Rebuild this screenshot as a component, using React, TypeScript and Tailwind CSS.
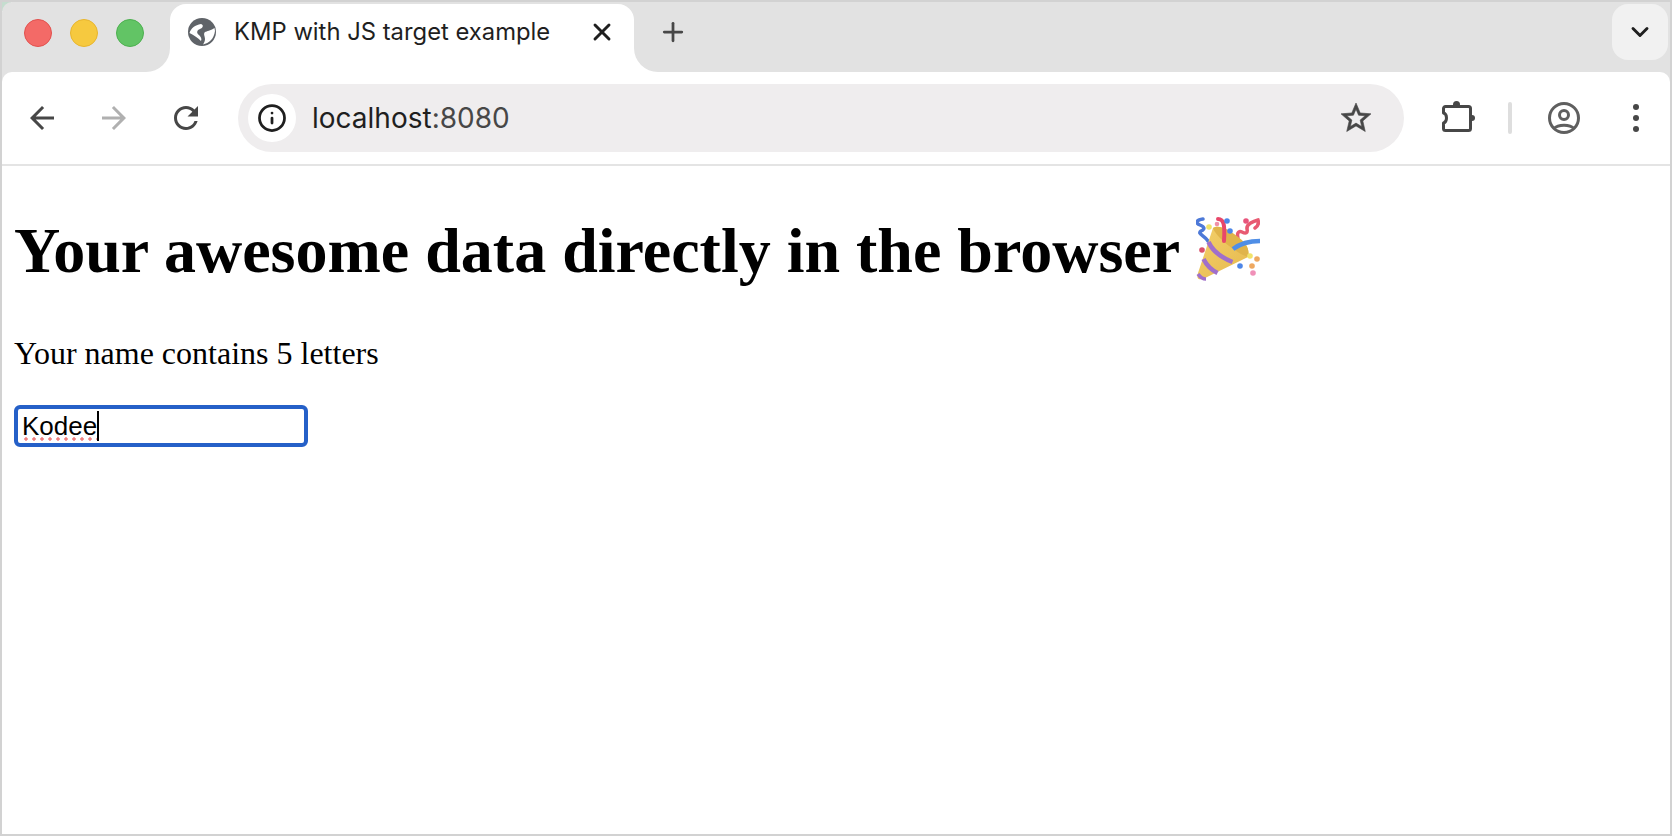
import { Info, X, Plus, ChevronDown } from 'lucide-react'

const SERIF = 'font-["Liberation_Serif","Times_New_Roman",serif]'

function MaterialIcon({ d, color, bold }: { d: string; color: string; bold?: boolean }) {
  return (
    <svg width="36" height="36" viewBox="0 0 24 24" fill={color} stroke={bold ? color : 'none'} strokeWidth={bold ? 0.4 : 0} className="shrink-0">
      <path d={d} />
    </svg>
  )
}

const BACK = 'M20 11H7.830l5.590-5.590L12 4l-8 8 8 8 1.410-1.410L7.830 13H20v-2z'
const FORWARD = 'M4 11h12.170l-5.590-5.590L12 4l8 8-8 8-1.410-1.410L16.170 13H4v-2z'
const RELOAD =
  'M17.650 6.350C16.200 4.900 14.210 4 12 4c-4.420 0-7.990 3.580-7.990 8s3.570 8 7.990 8c3.730 0 6.840-2.550 7.730-6h-2.080c-.82 2.330-3.040 4-5.650 4-3.310 0-6-2.690-6-6s2.690-6 6-6c1.660 0 3.140.69 4.220 1.780L13 11h7V4l-2.350 2.350z'
const STAR =
  'M22 9.240l-7.190-.62L12 2 9.190 8.630 2 9.240l5.460 4.730L5.820 21 12 17.270 18.180 21l-1.630-7.030L22 9.240zM12 15.400l-3.760 2.270 1-4.280-3.320-2.880 4.380-.38L12 6.100l1.710 4.040 4.380.38-3.320 2.880 1 4.280L12 15.400z'

function GlobeIcon() {
  return (
    <svg width="28" height="28" viewBox="0 0 28 28" className="shrink-0">
      <circle cx="14" cy="14" r="14" fill="#5f6368" />
      <path d="M1.500 15C3 10 7 7 13 6c3 1 2 4-1 5-3 1-4 4-1 6 2 2 3 4 2 6-3-3-7-6-11.500-8Z" fill="#fff" />
      <path d="M26.500 10c-4.500 3-7.500 3-9.500 4-2 2 0 4 0 7 0 2-1 4-2 5.500 6-1.500 11-5.500 12-13.500Z" fill="#fff" />
    </svg>
  )
}

function PuzzleIcon() {
  return (
    <svg width="36" height="36" viewBox="0 0 36 36" fill="none" className="shrink-0">
      <path
        d="M5.500 6.500h23a2 2 0 0 1 2 2v20a2 2 0 0 1-2 2h-23a2 2 0 0 1-2-2V23c4-1 4-9 0-10V8.500a2 2 0 0 1 2-2Z"
        stroke="#474747"
        strokeWidth="3"
        strokeLinejoin="round"
      />
      <circle cx="16.500" cy="4.500" r="3.500" fill="#474747" />
      <circle cx="32" cy="18" r="3" fill="#474747" />
    </svg>
  )
}

function ProfileIcon() {
  return (
    <svg width="32" height="32" viewBox="0 0 32 32" fill="none" stroke="#5f5f5f" strokeWidth="3" className="shrink-0">
      <circle cx="16" cy="16" r="14.500" />
      <circle cx="16" cy="13" r="4.500" />
      <path d="M6 26.500c4-4.500 16-4.500 20 0" />
    </svg>
  )
}

function MenuDots() {
  return (
    <svg width="6" height="28" viewBox="0 0 6 28" fill="#474747" className="shrink-0">
      <circle cx="3" cy="3" r="3" />
      <circle cx="3" cy="14" r="3" />
      <circle cx="3" cy="25" r="3" />
    </svg>
  )
}

function PartyPopper() {
  return (
    <svg width="64" height="64" viewBox="0 0 64 64" fill="none" className="shrink-0">
      <defs>
        <linearGradient id="gold" x1="0" y1="0" x2="1" y2="1">
          <stop offset="0" stopColor="#f3d06a" />
          <stop offset="1" stopColor="#e6b94e" />
        </linearGradient>
      </defs>
      <path d="M7 2C0 3-1 6 4 8c5 2 5 4 1 6-4 3 3 4 7 10" stroke="#4d79d8" strokeWidth="3.500" strokeLinecap="round" />
      <path d="M43 24c-3-7-1-11 3-9 4 2 6 1 5-3-1-5 7-8 11-9 1 3 0 6-3 8" stroke="#e85a72" strokeWidth="3.500" strokeLinecap="round" />
      <path d="M17 11 2 56c-2 6 1 7 5 6l45-22c2-8-2-14-9-19-9-8-20-14-26-10Z" fill="url(#gold)" />
      <path d="M17 11c3 9 23 25 35 29 2-8-2-14-9-19-9-8-20-14-26-10Z" fill="#e0b44a" />
      <path d="M12.500 25c4 9 14 16 24 20" stroke="#a06fcb" strokeWidth="4.500" />
      <path d="M7.500 42c3 6 8 11 14 14" stroke="#a06fcb" strokeWidth="4.500" />
      <path d="M2 57c2 3 5 5 8 5" stroke="#a06fcb" strokeWidth="3.500" />
      <path d="M22 2c6 0 7 6 6 22" stroke="#e8476a" strokeWidth="4" strokeLinecap="round" />
      <path d="M37 32c8-6 16-8 27-8" stroke="#4f8ee6" strokeWidth="4.500" />
      <circle cx="13" cy="10" r="2.800" fill="#f1e36a" />
      <circle cx="21" cy="7" r="2.300" fill="#f090a8" />
      <circle cx="31" cy="4" r="2.800" fill="#4d86e8" />
      <circle cx="34" cy="14" r="2.800" fill="#4d86e8" />
      <circle cx="50" cy="4" r="2.800" fill="#e8557c" />
      <circle cx="6" cy="33" r="2.800" fill="#d9506a" />
      <circle cx="54" cy="39" r="2.800" fill="#f1e36a" />
      <circle cx="61" cy="42" r="2.800" fill="#eea860" />
      <circle cx="56" cy="49" r="2.800" fill="#eea860" />
      <circle cx="44" cy="49" r="2.800" fill="#4d86e8" />
      <circle cx="57" cy="56" r="2.800" fill="#f090b8" />
    </svg>
  )
}

export default function App() {
  return (
    <div className="h-[836px] w-full overflow-hidden border-2 border-[#d2d2d2] bg-white font-['Inter',sans-serif]">
      {/* tab strip */}
      <div className="flex h-[70px] bg-[linear-gradient(135deg,#c5ddcf_0,#c5ddcf_7px,#ffffff_7px)]">
        <div className="flex h-full w-[168px] items-center gap-[18px] rounded-br-[24px] rounded-tl-[10px] bg-[#e2e2e2] pb-[9px] pl-[22px]">
          <span className="h-[28px] w-[28px] rounded-full border border-[#e2514e] bg-[#f36a67]" />
          <span className="h-[28px] w-[28px] rounded-full border border-[#e8b52d] bg-[#f6c93f]" />
          <span className="h-[28px] w-[28px] rounded-full border border-[#4cb04f] bg-[#62c465]" />
        </div>
        <div className="h-full w-[464px] bg-[#e2e2e2] pt-[2px]">
          <div className="flex h-full items-center rounded-t-[16px] bg-white pb-[12px] pl-[18px] pr-[18px]">
            <GlobeIcon />
            <span className="ml-[18px] flex-1 text-[23.8px] leading-none text-[#1f1f1f]">KMP with JS target example</span>
            <X size={28} strokeWidth={2.5} className="text-[#1f1f1f]" />
          </div>
        </div>
        <div className="flex h-full flex-1 items-start justify-between rounded-bl-[24px] bg-[#e2e2e2] pl-[24px] pr-[2px] pt-[2px]">
          <Plus size={30} strokeWidth={2.2} className="mt-[13px] text-[#474747]" />
          <div className="flex h-[56px] w-[56px] items-center justify-center rounded-[16px] bg-[#f1f1f1]">
            <ChevronDown size={28} strokeWidth={2.5} className="text-[#1f1f1f]" />
          </div>
        </div>
      </div>

      {/* toolbar */}
      <div className="bg-[#e2e2e2]">
        <div className="flex h-[92px] items-center rounded-t-[10px] bg-white pl-[22px]">
          <MaterialIcon d={BACK} color="#474747" />
          <div className="ml-[36px]">
            <MaterialIcon d={FORWARD} color="#b0b0b0" />
          </div>
          <div className="ml-[36px]">
            <MaterialIcon d={RELOAD} color="#474747" />
          </div>
          <div className="ml-[34px] flex h-[68px] w-[1166px] items-center rounded-full bg-[#efedee] pl-[10px] pr-[30px]">
            <div className="flex h-[48px] w-[48px] items-center justify-center rounded-full bg-white">
              <Info size={30} strokeWidth={2.2} className="text-[#1f1f1f]" />
            </div>
            <span className="ml-[16px] flex-1 text-[28px] leading-none text-[#1f1f1f]">
              localhost<span className="text-[#474747]">:8080</span>
            </span>
            <MaterialIcon d={STAR} color="#474747" bold />
          </div>
          <div className="ml-[36px]">
            <PuzzleIcon />
          </div>
          <div className="ml-[32px] h-[32px] w-[4px] rounded-full bg-[#dedede]" />
          <div className="ml-[36px]">
            <ProfileIcon />
          </div>
          <div className="ml-[53px]">
            <MenuDots />
          </div>
        </div>
      </div>
      <div className="h-[2px] bg-[#e4e4e4]" />

      {/* page */}
      <main className={`pl-[12px] text-black ${SERIF}`}>
        <h1 className="mt-[48px] flex items-center text-[64px] font-bold leading-[74px]">
          Your awesome data directly in the browser
          <span className="-mt-[4px] ml-[16px]">
            <PartyPopper />
          </span>
        </h1>
        <p className="mt-[47px] text-[32px] leading-[36px]">Your name contains 5 letters</p>
        <div className="mt-[34px] flex h-[42px] w-[294px] items-center rounded-[6px] border-[4px] border-[#2560c8] px-[4px] font-['Liberation_Sans',Arial,sans-serif] text-[26px]">
          <span className="relative leading-[30px]">
            Kodee
            <span className="absolute left-0 right-0 top-[26px] h-[4px] bg-[radial-gradient(circle,#f08080_1.500px,transparent_1.800px)] bg-[length:8px_4px]" />
          </span>
          <span className="h-[30px] w-[2px] bg-black" />
        </div>
      </main>
    </div>
  )
}
